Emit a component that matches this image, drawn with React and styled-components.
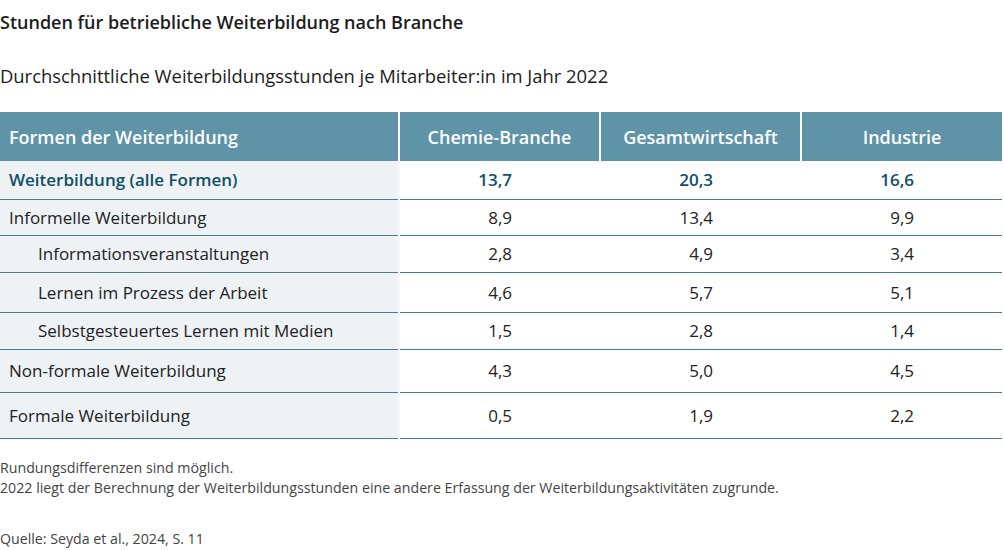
import styled, { createGlobalStyle } from "styled-components";

const GlobalStyle = createGlobalStyle`
  body {
    margin: 0;
    background: #fff;
    font-family: "Open Sans", "Liberation Sans", sans-serif;
    color: #222;
  }
`;

const Page = styled.div`
  width: 1004px;
  height: 551px;
  overflow: hidden;
`;

const Title = styled.h1`
  margin: 0;
  padding-top: 10px;
  font-size: 18px;
  line-height: 24px;
  font-weight: 600;
  color: #1c1c1c;
`;

const Subtitle = styled.h2`
  margin: 30px 0 0;
  font-size: 18.4px;
  line-height: 24px;
  font-weight: 400;
  color: #1c1c1c;
`;

const Table = styled.table`
  margin-top: 24px;
  width: 1002px;
  border-collapse: collapse;
  table-layout: fixed;
`;

const HeadCell = styled.th`
  height: 49px;
  padding: 0 ${(p) => (p.$first ? "9px" : "0")};
  background: #5e93a8;
  color: #fff;
  font-size: 18px;
  font-weight: 600;
  text-align: ${(p) => (p.$first ? "left" : "center")};
  border-left: ${(p) => (p.$first ? "none" : "2px solid #fff")};
`;

const Row = styled.tr`
  height: ${(p) => p.$h}px;
  border-bottom: 1px solid #3f7f94;
`;

const LabelCell = styled.td`
  background: #eef2f5;
  padding: 0 0 0 ${(p) => (p.$indent ? "38px" : "9px")};
  font-size: 17px;
  font-weight: ${(p) => (p.$bold ? 600 : 400)};
  color: ${(p) => (p.$bold ? "#0f4f68" : "#222")};
  border-right: 2px solid #f6f8fa;
`;

const ValueCell = styled.td`
  padding: 0 88px 0 0;
  text-align: right;
  font-size: 17px;
  font-weight: ${(p) => (p.$bold ? 600 : 400)};
  color: ${(p) => (p.$bold ? "#0f4f68" : "#222")};
`;

const Notes = styled.div`
  margin-top: 19px;
  font-size: 14.2px;
  line-height: 20px;
  color: #444;
`;

const Source = styled.div`
  margin-top: 31px;
  font-size: 14.2px;
  line-height: 20px;
  color: #444;
`;

const rows = [
  { label: "Weiterbildung (alle Formen)", values: ["13,7", "20,3", "16,6"], bold: true, h: 38 },
  { label: "Informelle Weiterbildung", values: ["8,9", "13,4", "9,9"], h: 36 },
  { label: "Informationsveranstaltungen", values: ["2,8", "4,9", "3,4"], indent: true, h: 37 },
  { label: "Lernen im Prozess der Arbeit", values: ["4,6", "5,7", "5,1"], indent: true, h: 40 },
  { label: "Selbstgesteuertes Lernen mit Medien", values: ["1,5", "2,8", "1,4"], indent: true, h: 37 },
  { label: "Non-formale Weiterbildung", values: ["4,3", "5,0", "4,5"], h: 43 },
  { label: "Formale Weiterbildung", values: ["0,5", "1,9", "2,2"], h: 46 },
];

export default function App() {
  return (
    <Page>
      <GlobalStyle />
      <Title>Stunden für betriebliche Weiterbildung nach Branche</Title>
      <Subtitle>Durchschnittliche Weiterbildungsstunden je Mitarbeiter:in im Jahr 2022</Subtitle>
      <Table>
        <colgroup>
          <col style={{ width: 399 }} />
          <col style={{ width: 201 }} />
          <col style={{ width: 201 }} />
          <col style={{ width: 201 }} />
        </colgroup>
        <thead>
          <tr>
            <HeadCell $first>Formen der Weiterbildung</HeadCell>
            <HeadCell>Chemie-Branche</HeadCell>
            <HeadCell>Gesamtwirtschaft</HeadCell>
            <HeadCell>Industrie</HeadCell>
          </tr>
        </thead>
        <tbody>
          {rows.map((r) => (
            <Row key={r.label} $h={r.h}>
              <LabelCell $indent={r.indent} $bold={r.bold}>{r.label}</LabelCell>
              {r.values.map((v, i) => (
                <ValueCell key={i} $bold={r.bold}>{v}</ValueCell>
              ))}
            </Row>
          ))}
        </tbody>
      </Table>
      <Notes>
        Rundungsdifferenzen sind möglich.
        <br />
        2022 liegt der Berechnung der Weiterbildungsstunden eine andere Erfassung der Weiterbildungsaktivitäten zugrunde.
      </Notes>
      <Source>Quelle: Seyda et al., 2024, S. 11</Source>
    </Page>
  );
}
